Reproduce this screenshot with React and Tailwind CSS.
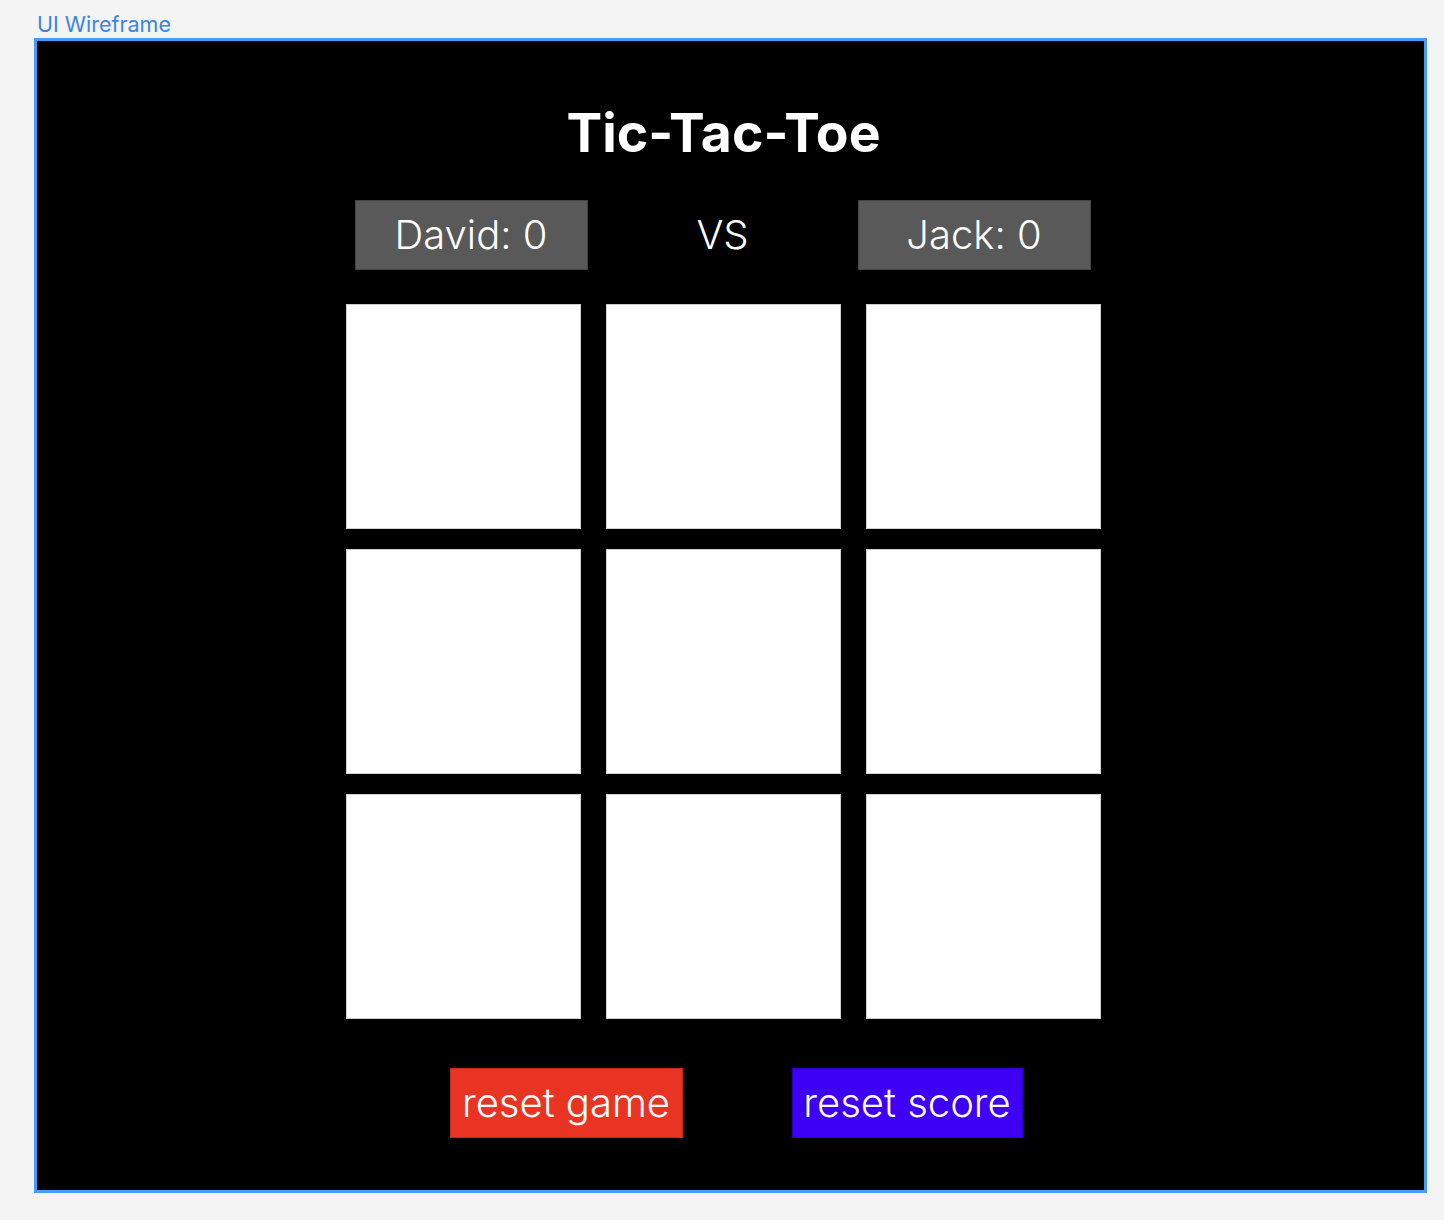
import React from 'react'

const font = { fontFamily: 'Inter, "Noto Sans", sans-serif' }

const Cell = () => (
  <div className="w-[235px] h-[225px] bg-white border border-[#cfcfcf]" />
)

export default function App() {
  return (
    <div className="min-h-[1220px] bg-[#f4f4f4] pl-[34px] pt-[10px]" style={font}>
      <div className="text-[21.5px] leading-[28px] text-[#3b84e4] pl-[3px]">UI Wireframe</div>
      <div className="w-[1393px] h-[1155px] border-[3px] border-[#4a9af5] bg-black flex flex-col items-center pr-[14px]">
        <h1 className="mt-[65px] text-[53.5px] leading-none font-bold text-white">
          Tic-Tac-Toe
        </h1>

        <div className="mt-[40px] mr-[2px] flex items-center">
          <div className="w-[233px] h-[70px] bg-[#595959] border border-[#444] flex items-center justify-center text-[40px] font-light text-white">
            David: 0
          </div>
          <div className="w-[270px] text-center text-[40px] font-light text-white">VS</div>
          <div className="w-[233px] h-[70px] bg-[#595959] border border-[#444] flex items-center justify-center text-[40px] font-light text-white">
            Jack: 0
          </div>
        </div>

        <div className="mt-[34px] grid grid-cols-3 gap-x-[25px] gap-y-[20px]">
          {Array.from({ length: 9 }).map((_, i) => (
            <Cell key={i} />
          ))}
        </div>

        <div className="mt-[49px] ml-[25px] flex gap-[109px]">
          <button className="w-[233px] h-[70px] bg-[#e93424] border border-[#c4271b] text-white text-[40px] font-light leading-none">
            reset game
          </button>
          <button className="w-[231px] h-[70px] bg-[#3d00f5] border border-[#2c00c0] text-white text-[40px] font-light leading-none">
            reset score
          </button>
        </div>
      </div>
    </div>
  )
}
